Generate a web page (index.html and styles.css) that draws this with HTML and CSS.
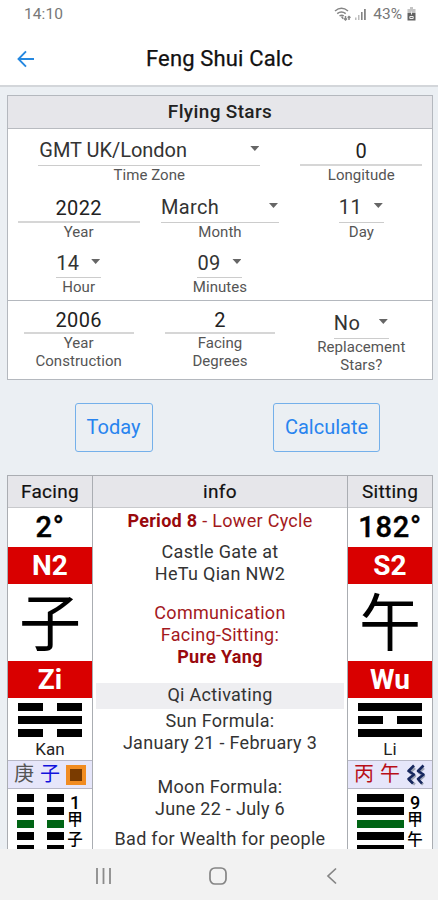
FILE: index.html
```html
<!DOCTYPE html>
<html lang="en">
<head>
<meta charset="utf-8">
<title>Feng Shui Calc</title>
<link rel="stylesheet" href="styles.css">
</head>
<body>
<div class="phone">
  <div class="status">
    <span class="clock">14:10</span>
    <div class="status-right">
      <svg class="wifi" width="18" height="15" viewBox="0 0 18 15" fill="none" stroke="#858585" stroke-width="1.5"><path d="M1 4C5 .7 10 .7 14 4M3.2 6.600c2.700-2.100 5.800-2.100 8.500 0M5.500 9c1.500-1 3-1 4.300 0"/><path d="M7.600 9.500l1.600 2.200M11.500 9v4M10 11.500l1.500 1.500 1.500-1.500M15 13V9.500M13.700 10.800L15 9.500l1.500 1.300"/></svg>
      <svg class="signal" width="13" height="13" viewBox="0 0 13 13" fill="#858585"><path d="M1 9.500h1.500V12H1zM4 7h1.500v5H4z" opacity=".55"/><path d="M7 4h1.600v8H7zM10 1h1.800v11H10z"/></svg>
      <span class="percent">43%</span>
      <svg class="battery" width="9" height="14" viewBox="0 0 9 14"><path d="M3 0h3v2h2.500v4H.5V2H3z" fill="#c4c4c4"/><path d="M.5 6h8v7.500h-8z" fill="#626262"/><path d="M4.500 4.500v3M2.800 9.500h3.400v2H2.800z" stroke="#eee" fill="none"/></svg>
    </div>
  </div>
  <header class="appbar">
    <svg class="back" width="18" height="18" viewBox="0 0 18 18" fill="none" stroke="#2588e0" stroke-width="1.900"><path d="M17 9H1.800M9 1.300L1.500 9 9 16.700"/></svg>
    <h1>Feng Shui Calc</h1>
  </header>
  <main>
    <section class="card">
      <h2>Flying Stars</h2>
      <div class="fields">
        <div class="field wide r1"><div class="value select w222"><span class="tz">GMT UK/London</span><i></i></div><label>Time Zone</label></div>
        <div class="field r1"><div class="value input w122">0</div><label>Longitude</label></div>
        <div class="field r2"><div class="value input w122">2022</div><label>Year</label></div>
        <div class="field r2"><div class="value select w118"><span>March</span><i></i></div><label>Month</label></div>
        <div class="field r2"><div class="value select w45"><span>11</span><i></i></div><label>Day</label></div>
        <div class="field r3"><div class="value select w45"><span>14</span><i></i></div><label>Hour</label></div>
        <div class="field r3"><div class="value select w45"><span>09</span><i></i></div><label>Minutes</label></div>
      </div>
      <div class="fields construction">
        <div class="field"><div class="value input w110">2006</div><label>Year<br>Construction</label></div>
        <div class="field"><div class="value input w110">2</div><label>Facing<br>Degrees</label></div>
        <div class="field drop"><div class="value select w55"><span>No</span><i></i></div><label>Replacement<br>Stars?</label></div>
      </div>
    </section>
    <div class="actions"><button>Today</button><button class="calc">Calculate</button></div>
    <section class="chart">
      <div class="col side">
        <div class="head">Facing</div>
        <div class="degree">2°</div>
        <div class="red">N2</div>
        <div class="glyph">子</div>
        <div class="red">Zi</div>
        <div class="trigram"><div class="yin"></div><div></div><div class="yin"></div><span>Kan</span></div>
        <div class="stems"><span class="gray">庚</span><span class="blue">子</span><span class="earth"></span></div>
        <div class="hex">
          <div class="lines"><div class="yin"></div><div class="yin"></div><div class="yin green"></div><div class="yin"></div><div class="yin"></div></div>
          <div class="hexname"><b>1</b><span>甲</span><span>子</span></div>
        </div>
      </div>
      <div class="col info">
        <div class="head">info</div>
        <p class="maroon period"><b>Period 8</b> - Lower Cycle</p>
        <p class="castle">Castle Gate at<br>HeTu Qian NW2</p>
        <p class="maroon comm">Communication<br>Facing-Sitting:<br><b>Pure Yang</b></p>
        <p class="band">Qi Activating</p>
        <p class="sun">Sun Formula:<br>January 21 - February 3</p>
        <p class="moon">Moon Formula:<br>June 22 - July 6</p>
        <p class="bad">Bad for Wealth for people</p>
      </div>
      <div class="col side">
        <div class="head">Sitting</div>
        <div class="degree">182°</div>
        <div class="red">S2</div>
        <div class="glyph">午</div>
        <div class="red">Wu</div>
        <div class="trigram"><div></div><div class="yin"></div><div></div><span>Li</span></div>
        <div class="stems"><span class="crimson">丙</span><span class="crimson">午</span>
          <svg width="20" height="22" viewBox="0 0 20 22" fill="none" stroke-linejoin="round"><path d="M9 4L4 8.500l5 3.500-5 4.500 5 4M18 4l-5 4.500 5 3.500-5 4.500 4 4" stroke="#9ea4b5" stroke-width="2.600"/><path d="M8 1.500L2.500 7 8 10.500 2.500 15 7 19.500M17.500 1.500L12 7l5.500 3.500L12 15l4 4.500" stroke="#17275f" stroke-width="2.600"/></svg>
        </div>
        <div class="hex">
          <div class="lines"><div></div><div></div><div class="green"></div><div></div><div></div></div>
          <div class="hexname"><b>9</b><span>甲</span><span>午</span></div>
        </div>
      </div>
    </section>
  </main>
  <nav class="sysnav">
    <svg width="18" height="18" viewBox="0 0 18 18" stroke="#8b8b8b" stroke-width="1.800"><path d="M2 1v16M8.500 1v16M15 1v16"/></svg>
    <svg width="18" height="18" viewBox="0 0 18 18" fill="none" stroke="#858585" stroke-width="1.700"><rect x="1" y="1" width="16" height="16" rx="5"/></svg>
    <svg width="18" height="18" viewBox="0 0 18 18" fill="none" stroke="#858585" stroke-width="1.700"><path d="M13 1.500L5 9l8 7.500"/></svg>
  </nav>
</div>
</body>
</html>
```
FILE: styles.css
```css
* { box-sizing: border-box; }
body { margin: 0; background: #ebeff3; color: #222; font-family: Roboto, "Noto Sans CJK SC", sans-serif; }
h1, h2, p { margin: 0; }
.phone { width: 438px; height: 900px; overflow: hidden; display: flex; flex-direction: column; }
.status { height: 28px; background: #fff; display: flex; justify-content: space-between; padding: 0 22px 0 24px; color: #777; font-size: 15.500px; line-height: 28px; letter-spacing: .1px; }
.status-right { display: flex; align-items: center; font-size: 15.500px; }
.wifi { margin-right: 2px; }
.signal { margin-right: 6px; }
.percent { margin-right: 5px; letter-spacing: 0; }
.appbar { height: 59px; flex: none; background: #fff; border-bottom: 2px solid #d3d6da; display: grid; grid-template-columns: 43px 1fr 43px; align-items: center; padding-top: 4px; }
.back { margin-left: 17px; }
h1 { font-size: 22px; line-height: 30px; font-weight: 400; text-align: center; color: #111; letter-spacing: .15px; -webkit-text-stroke: .25px #111; padding-left: 1px; }
main { height: 762px; flex: none; overflow: hidden; padding: 8px 5px 0 7px; }
.card { height: 285px; border: 1px solid #b4b8be; background: #fff; }
h2 { height: 33px; line-height: 32px; background: #e6e6ea; border-bottom: 1px solid #b8bbc0; text-align: center; font-size: 19px; font-weight: 500; letter-spacing: .35px; }
.fields { display: grid; grid-template-columns: repeat(3, 1fr); grid-template-rows: 65px 57px 49px; height: 172px; border-bottom: 1px solid #b4b8be; }
.fields.construction { grid-template-rows: 77px; height: 77px; border: 0; }
.field { display: flex; flex-direction: column; align-items: center; min-width: 0; }
.wide { grid-column: span 2; }
.value { height: 28px; line-height: 24px; font-size: 20px; letter-spacing: .35px; border-bottom: 1px solid #ccc; }
.tz { letter-spacing: -.03px; padding-left: 1px; }
.r1 { padding-top: 9px; }
.r2 { padding-top: 1px; }
.r3 .value { height: 27px; }
.construction .field { padding-top: 7px; }
.construction .field.drop { padding-top: 10px; }
.construction .value { height: 26px; }
.construction .drop .value { height: 28px; line-height: 25px; }
.construction .drop label { margin-top: -1px; }
.input { text-align: center; line-height: 27px; border-bottom-width: 2px; border-bottom-color: #d6d6d6; }
.construction .input { line-height: 25px; }
.select { display: flex; justify-content: space-between; color: #333; }
.select i { width: 9px; height: 5px; margin: 8px 1px 0 0; background: #666; clip-path: polygon(0 0, 100% 0, 50% 100%); }
.w222 { width: 222px; }
.w122 { width: 122px; }
.w118 { width: 118px; }
.w110 { width: 110px; }
.w55 { width: 55px; }
.w45 { width: 45px; }
label { font-size: 15px; line-height: 18px; letter-spacing: .05px; color: #555; text-align: center; }
.actions { display: grid; grid-template-columns: 1fr 1fr; justify-items: center; padding-top: 23px; height: 95px; }
button { width: 78px; height: 49px; padding: 0; border: 1px solid #74b0ea; border-radius: 3px; background: transparent; color: #2884ef; font: 400 20px/47px Roboto, sans-serif; letter-spacing: 0; }
.calc { width: 107px; }
.chart { display: grid; grid-template-columns: 84px 1fr 84px; border: 1px solid #aaadb2; background: #fff; height: 420px; }
.col { text-align: center; min-width: 0; }
.info { border-left: 1px solid #aaadb2; border-right: 1px solid #aaadb2; }
.head { height: 32px; line-height: 32px; background: #e6e6ea; border-bottom: 1px solid #c8c9cc; font-size: 19px; letter-spacing: .3px; color: #111; -webkit-text-stroke: .2px #111; }
.degree { height: 39px; line-height: 38px; font-size: 29px; font-weight: 500; color: #000; letter-spacing: .8px; -webkit-text-stroke: .4px #000; }
.red { height: 37px; line-height: 38px; background: #d90000; color: #fff; font-size: 28px; font-weight: 700; }
.glyph { height: 77px; line-height: 81px; font-size: 62px; color: #000; overflow: hidden; }
.trigram { height: 63px; padding: 5px 10px 0; border-bottom: 1px solid #b7b7c6; display: flex; flex-direction: column; }
.trigram div { height: 8px; margin-bottom: 5px; background: #000; }
.trigram .yin { background: linear-gradient(90deg, #000 39%, transparent 39%, transparent 61%, #000 61%); }
.trigram span { font-size: 17px; line-height: 14px; letter-spacing: .1px; }
.stems { height: 28px; border-bottom: 1px solid #b7b7c6; background: #e6e6fa; display: flex; align-items: center; justify-content: center; gap: 6px; font-size: 20px; line-height: 27px; }
.gray { color: #555; }
.blue { color: #1212dd; }
.crimson { color: #b80e17; }
.earth { width: 20px; height: 20px; background: #7a3b00; border: 4px solid #f18c22; }
.hex { display: grid; grid-template-columns: 47px 20px; padding: 5px 0 0 9px; column-gap: 1px; }
.lines div { height: 8px; margin-bottom: 4.800px; background: #000; }
.lines .yin { background: linear-gradient(90deg, #000 36%, transparent 36%, transparent 64%, #000 64%); }
.lines .green { background: #006414; }
.lines .yin.green { background: linear-gradient(90deg, #006414 36%, transparent 36%, transparent 64%, #006414 64%); }
.hexname { display: flex; flex-direction: column; color: #000; font-size: 15.500px; font-weight: 500; line-height: 19.500px; }
.hexname b { font-size: 18px; line-height: 17px; font-weight: 500; }
.info p { font-size: 18px; line-height: 22px; letter-spacing: .3px; color: #333; }
.info .maroon { color: #a3191d; }
.info .maroon b { font-weight: 700; color: #99090d; }
.info .period { padding-top: 2px; }
.info .castle { padding-top: 9px; }
.info .comm { padding-top: 17px; }
.info .band { margin: 15px 3px 0; height: 26px; line-height: 24px; background: #eeeef1; }
.info .sun { padding-top: 1px; }
.info .moon { padding-top: 22px; }
.info .bad { padding-top: 8px; }
.sysnav { height: 51px; flex: none; background: #f2f2f2; display: flex; align-items: center; justify-content: space-between; padding: 2px 97px 0 95px; }
```
